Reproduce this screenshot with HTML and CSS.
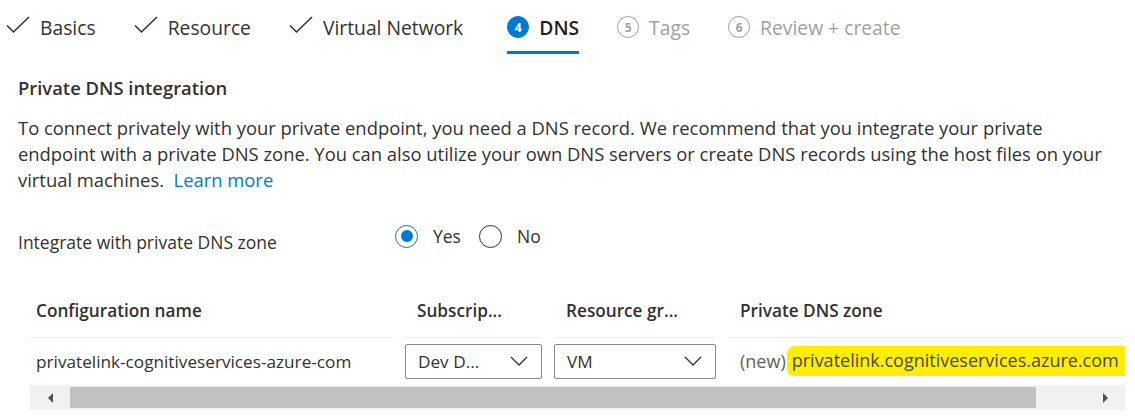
FILE: index.html
```html
<!DOCTYPE html>
<html lang="en">
<head>
<meta charset="utf-8">
<title>Create a private endpoint - DNS</title>
<link rel="stylesheet" href="styles.css">
</head>
<body>
<nav class="tabs">
  <div class="tab done">
    <svg class="check" viewBox="0 0 24 18" width="24" height="18"><path d="M1 9.5 L7.5 16 L23 1" fill="none" stroke="#323130" stroke-width="1.6"/></svg>
    <span>Basics</span>
  </div>
  <div class="tab done">
    <svg class="check" viewBox="0 0 24 18" width="24" height="18"><path d="M1 9.5 L7.5 16 L23 1" fill="none" stroke="#323130" stroke-width="1.6"/></svg>
    <span>Resource</span>
  </div>
  <div class="tab done">
    <svg class="check" viewBox="0 0 24 18" width="24" height="18"><path d="M1 9.5 L7.5 16 L23 1" fill="none" stroke="#323130" stroke-width="1.6"/></svg>
    <span>Virtual Network</span>
  </div>
  <div class="tab active">
    <span class="num">4</span>
    <span>DNS</span>
  </div>
  <div class="tab todo">
    <span class="num">5</span>
    <span>Tags</span>
  </div>
  <div class="tab todo">
    <span class="num">6</span>
    <span>Review + create</span>
  </div>
</nav>

<section class="content">
  <h2 class="heading">Private DNS integration</h2>
  <p class="desc">To connect privately with your private endpoint, you need a DNS record. We recommend that you integrate your private endpoint with a private DNS zone. You can also utilize your own DNS servers or create DNS records using the host files on your virtual machines.&nbsp; <a href="#" class="link">Learn more</a></p>

  <div class="field">
    <span class="field-label">Integrate with private DNS zone</span>
    <div class="radios">
      <label class="radio checked"><span class="dot"></span>Yes</label>
      <label class="radio"><span class="dot"></span>No</label>
    </div>
  </div>

  <div class="grid">
    <div class="th first">Configuration name</div>
    <div class="th">Subscrip...</div>
    <div class="th">Resource gr...</div>
    <div class="th">Private DNS zone</div>

    <div class="td first">privatelink-cognitiveservices-azure-com</div>
    <div class="td ctl"><div class="select"><span>Dev D...</span><svg viewBox="0 0 18 10" width="18" height="10"><path d="M1 1 L9 9 L17 1" fill="none" stroke="#323130" stroke-width="1.3"/></svg></div></div>
    <div class="td ctl"><div class="select"><span>VM</span><svg viewBox="0 0 18 10" width="18" height="10"><path d="M1 1 L9 9 L17 1" fill="none" stroke="#323130" stroke-width="1.3"/></svg></div></div>
    <div class="td zone"><span class="new">(new)</span><span class="mark">privatelink.cognitiveservices.azure.com</span></div>
  </div>

  <div class="hscroll">
    <span class="arrow left"></span>
    <div class="track"><div class="thumb"></div></div>
    <span class="arrow right"></span>
  </div>
</section>
</body>
</html>
```

FILE: styles.css
```css
* { box-sizing: border-box; }

body {
  margin: 0;
  background: #ffffff;
  color: #323130;
  font-family: "Segoe UI", "Open Sans", "Noto Sans", sans-serif;
  overflow: hidden;
}

.tabs {
  display: flex;
  align-items: stretch;
  gap: 38px;
  padding-left: 6px;
  height: 54px;
}

.tab {
  display: flex;
  align-items: center;
  gap: 10px;
  font-size: 19.3px;
  padding-top: 3px;
  border-bottom: 3px solid transparent;
  color: #323130;
  white-space: nowrap;
}

.tab.active {
  margin-left: 6px;
  border-bottom-color: #0078d4;
  color: #201f1e;
  font-weight: 600;
}

.tab.todo { color: #a19f9d; }

.check { display: block; margin-top: -4px; }

.num {
  width: 22px;
  height: 22px;
  border-radius: 50%;
  display: flex;
  align-items: center;
  justify-content: center;
  font-size: 12px;
  font-weight: 700;
  border: 1.5px solid #a19f9d;
  color: #a19f9d;
}

.tab.active .num {
  background: #0078d4;
  border-color: #0078d4;
  color: #ffffff;
}

.content { padding: 0 0 0 18px; }

.heading {
  margin: 20px 0 0;
  font-size: 18.4px;
  font-weight: 600;
  line-height: 28px;
  color: #323130;
}

.desc {
  margin: 13px 0 0;
  font-size: 18.4px;
  line-height: 26px;
  max-width: 1100px;
  color: #323130;
}

.link { color: #0078d4; text-decoration: none; }

.field {
  display: flex;
  align-items: center;
  margin-top: 28px;
  height: 34px;
}

.field-label { width: 377px; font-size: 17.5px; padding-top: 8px; }

.radios { display: flex; gap: 18px; margin-top: -4px; }

.radio {
  display: flex;
  align-items: center;
  gap: 15px;
  font-size: 17.5px;
}

.dot {
  width: 23px;
  height: 23px;
  border-radius: 50%;
  border: 1.5px solid #323130;
  display: flex;
  align-items: center;
  justify-content: center;
}

.radio.checked .dot { border-color: #0078d4; }
.radio.checked .dot::after {
  content: "";
  width: 12px;
  height: 12px;
  border-radius: 50%;
  background: #0078d4;
}

.grid {
  margin: 28px 0 0 12px;
  width: 1095px;
  display: grid;
  grid-template-columns: 363px 137px 162px 1fr;
  column-gap: 12px;
  font-size: 17.2px;
  overflow: hidden;
}

.th {
  font-weight: 600;
  height: 55px;
  display: flex;
  align-items: center;
  padding-left: 12px;
  border-bottom: 1px solid #edebe9;
  white-space: nowrap;
}

.th.first { padding-left: 6px; }

.td {
  height: 46px;
  display: flex;
  align-items: center;
  white-space: nowrap;
}

.td.first { padding-left: 6px; }
.td.zone {
  padding-left: 12px;
  overflow: hidden;
  color: #605e5c;
  font-size: 18px;
}

.select {
  width: 100%;
  height: 35px;
  border: 1px solid #8a8886;
  border-radius: 2px;
  display: flex;
  align-items: center;
  justify-content: space-between;
  padding: 0 13px 0 12px;
  color: #323130;
}

.new { color: #605e5c; margin-right: 1px; }

.mark {
  background: #ffee00;
  color: #4a4a48;
  padding: 2px 20px 4px 5px;
  border-radius: 8px 2px 10px 6px;
}

.hscroll {
  margin: 1px 0 0 12px;
  width: 1095px;
  height: 25px;
  background: #f1f1f1;
  display: flex;
  align-items: center;
}

.arrow { width: 40px; display: flex; justify-content: center; }
.arrow.left::before {
  content: "";
  border-top: 5px solid transparent;
  border-bottom: 5px solid transparent;
  border-right: 5px solid #505050;
}
.arrow.right::before {
  content: "";
  border-top: 5px solid transparent;
  border-bottom: 5px solid transparent;
  border-left: 5px solid #505050;
}

.track { flex: 1; height: 21px; }
.thumb { width: 966px; height: 21px; background: #c1c1c1; }
```
